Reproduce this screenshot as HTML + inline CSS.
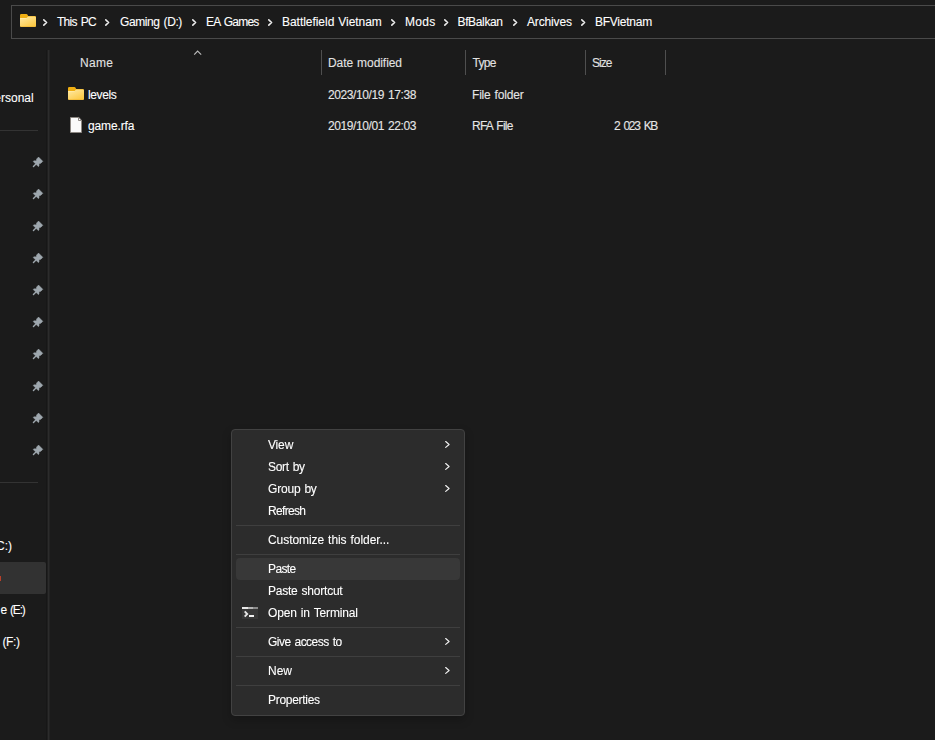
<!DOCTYPE html>
<html><head><meta charset="utf-8">
<style>
html,body{margin:0;padding:0;}
body{width:935px;height:740px;overflow:hidden;background:#1b1b1b;position:relative;font-family:"Liberation Sans",sans-serif;font-size:12px;}
.t{position:absolute;white-space:nowrap;line-height:14px;-webkit-text-stroke:0.1px currentColor;}
.ic{position:absolute;overflow:visible;}
.r{position:absolute;}
</style></head><body>
<svg width="0" height="0" style="position:absolute"><defs>
<linearGradient id="fg" x1="0" y1="0" x2="0.7" y2="1"><stop offset="0" stop-color="#ffeaa6"/><stop offset="1" stop-color="#fcc944"/></linearGradient>
</defs></svg>
<!-- address bar -->
<div class="r" style="left:11px;top:5px;width:940px;height:32px;border:1px solid #4a4a4a;"></div>
<svg class="ic" style="left:20px;top:14px" width="16" height="13" viewBox="0 0 16 13">
<path d="M0 1.2 Q0 0 1.2 0 H6.4 Q7 0 7.4 0.6 L8.2 2 H14.8 Q16 2 16 3.2 V5 H0 Z" fill="#efae12"/>
<path d="M0 4 H6.6 L8 2.6 H14.8 Q16 2.6 16 3.8 V11.8 Q16 13 14.8 13 H1.2 Q0 13 0 11.8 Z" fill="url(#fg)"/><path d="M0.4 12.4 H15.6" stroke="#f0b430" stroke-width="0.8" opacity="0.8"/><path d="M0.3 4.4 H6.6" stroke="#fff3c4" stroke-width="0.7" opacity="0.7"/>
</svg>
<svg class="ic" style="left:42px;top:17px" width="9" height="11" viewBox="0 0 9 11"><path d="M1.8 2.9 L4.6 5.5 L1.8 8.1" fill="none" stroke="#ececec" stroke-width="1.6" stroke-linecap="round" stroke-linejoin="round"/></svg><svg class="ic" style="left:104px;top:17px" width="9" height="11" viewBox="0 0 9 11"><path d="M1.8 2.9 L4.6 5.5 L1.8 8.1" fill="none" stroke="#ececec" stroke-width="1.6" stroke-linecap="round" stroke-linejoin="round"/></svg><svg class="ic" style="left:191px;top:17px" width="9" height="11" viewBox="0 0 9 11"><path d="M1.8 2.9 L4.6 5.5 L1.8 8.1" fill="none" stroke="#ececec" stroke-width="1.6" stroke-linecap="round" stroke-linejoin="round"/></svg><svg class="ic" style="left:266.5px;top:17px" width="9" height="11" viewBox="0 0 9 11"><path d="M1.8 2.9 L4.6 5.5 L1.8 8.1" fill="none" stroke="#ececec" stroke-width="1.6" stroke-linecap="round" stroke-linejoin="round"/></svg><svg class="ic" style="left:390px;top:17px" width="9" height="11" viewBox="0 0 9 11"><path d="M1.8 2.9 L4.6 5.5 L1.8 8.1" fill="none" stroke="#ececec" stroke-width="1.6" stroke-linecap="round" stroke-linejoin="round"/></svg><svg class="ic" style="left:443px;top:17px" width="9" height="11" viewBox="0 0 9 11"><path d="M1.8 2.9 L4.6 5.5 L1.8 8.1" fill="none" stroke="#ececec" stroke-width="1.6" stroke-linecap="round" stroke-linejoin="round"/></svg><svg class="ic" style="left:512px;top:17px" width="9" height="11" viewBox="0 0 9 11"><path d="M1.8 2.9 L4.6 5.5 L1.8 8.1" fill="none" stroke="#ececec" stroke-width="1.6" stroke-linecap="round" stroke-linejoin="round"/></svg><svg class="ic" style="left:580px;top:17px" width="9" height="11" viewBox="0 0 9 11"><path d="M1.8 2.9 L4.6 5.5 L1.8 8.1" fill="none" stroke="#ececec" stroke-width="1.6" stroke-linecap="round" stroke-linejoin="round"/></svg>
<!-- sidebar -->
<div class="r" style="left:46px;top:50px;width:1px;height:690px;background:#171717"></div>
<div class="r" style="left:47px;top:50px;width:1px;height:690px;background:#1f1f1f"></div>
<div class="r" style="left:48px;top:50px;width:1px;height:690px;background:#2c2c2c"></div>
<div class="r" style="left:49px;top:50px;width:1px;height:690px;background:#232323"></div>
<div class="r" style="left:0;top:130px;width:38px;height:1px;background:#333"></div>
<div class="r" style="left:0;top:482px;width:38px;height:1px;background:#333"></div>
<svg class="ic" style="left:30px;top:154px" width="16" height="16" viewBox="0 0 16 16"><g transform="translate(10.8,5.05) rotate(135)" fill="#9ea7ae"><path d="M0.2 -3.0 L2.8 -3.0 L4.6 -2.0 L6.1 -3.6 L7.1 -3.6 L7.1 3.6 L6.1 3.6 L4.6 2.0 L2.8 3.0 L0.2 3.0 Z" stroke="#9ea7ae" stroke-width="0.5" stroke-linejoin="round"/><rect x="6.5" y="-0.7" width="4.6" height="1.4" rx="0.7"/></g></svg><svg class="ic" style="left:30px;top:186px" width="16" height="16" viewBox="0 0 16 16"><g transform="translate(10.8,5.05) rotate(135)" fill="#9ea7ae"><path d="M0.2 -3.0 L2.8 -3.0 L4.6 -2.0 L6.1 -3.6 L7.1 -3.6 L7.1 3.6 L6.1 3.6 L4.6 2.0 L2.8 3.0 L0.2 3.0 Z" stroke="#9ea7ae" stroke-width="0.5" stroke-linejoin="round"/><rect x="6.5" y="-0.7" width="4.6" height="1.4" rx="0.7"/></g></svg><svg class="ic" style="left:30px;top:218px" width="16" height="16" viewBox="0 0 16 16"><g transform="translate(10.8,5.05) rotate(135)" fill="#9ea7ae"><path d="M0.2 -3.0 L2.8 -3.0 L4.6 -2.0 L6.1 -3.6 L7.1 -3.6 L7.1 3.6 L6.1 3.6 L4.6 2.0 L2.8 3.0 L0.2 3.0 Z" stroke="#9ea7ae" stroke-width="0.5" stroke-linejoin="round"/><rect x="6.5" y="-0.7" width="4.6" height="1.4" rx="0.7"/></g></svg><svg class="ic" style="left:30px;top:250px" width="16" height="16" viewBox="0 0 16 16"><g transform="translate(10.8,5.05) rotate(135)" fill="#9ea7ae"><path d="M0.2 -3.0 L2.8 -3.0 L4.6 -2.0 L6.1 -3.6 L7.1 -3.6 L7.1 3.6 L6.1 3.6 L4.6 2.0 L2.8 3.0 L0.2 3.0 Z" stroke="#9ea7ae" stroke-width="0.5" stroke-linejoin="round"/><rect x="6.5" y="-0.7" width="4.6" height="1.4" rx="0.7"/></g></svg><svg class="ic" style="left:30px;top:282px" width="16" height="16" viewBox="0 0 16 16"><g transform="translate(10.8,5.05) rotate(135)" fill="#9ea7ae"><path d="M0.2 -3.0 L2.8 -3.0 L4.6 -2.0 L6.1 -3.6 L7.1 -3.6 L7.1 3.6 L6.1 3.6 L4.6 2.0 L2.8 3.0 L0.2 3.0 Z" stroke="#9ea7ae" stroke-width="0.5" stroke-linejoin="round"/><rect x="6.5" y="-0.7" width="4.6" height="1.4" rx="0.7"/></g></svg><svg class="ic" style="left:30px;top:314px" width="16" height="16" viewBox="0 0 16 16"><g transform="translate(10.8,5.05) rotate(135)" fill="#9ea7ae"><path d="M0.2 -3.0 L2.8 -3.0 L4.6 -2.0 L6.1 -3.6 L7.1 -3.6 L7.1 3.6 L6.1 3.6 L4.6 2.0 L2.8 3.0 L0.2 3.0 Z" stroke="#9ea7ae" stroke-width="0.5" stroke-linejoin="round"/><rect x="6.5" y="-0.7" width="4.6" height="1.4" rx="0.7"/></g></svg><svg class="ic" style="left:30px;top:346px" width="16" height="16" viewBox="0 0 16 16"><g transform="translate(10.8,5.05) rotate(135)" fill="#9ea7ae"><path d="M0.2 -3.0 L2.8 -3.0 L4.6 -2.0 L6.1 -3.6 L7.1 -3.6 L7.1 3.6 L6.1 3.6 L4.6 2.0 L2.8 3.0 L0.2 3.0 Z" stroke="#9ea7ae" stroke-width="0.5" stroke-linejoin="round"/><rect x="6.5" y="-0.7" width="4.6" height="1.4" rx="0.7"/></g></svg><svg class="ic" style="left:30px;top:378px" width="16" height="16" viewBox="0 0 16 16"><g transform="translate(10.8,5.05) rotate(135)" fill="#9ea7ae"><path d="M0.2 -3.0 L2.8 -3.0 L4.6 -2.0 L6.1 -3.6 L7.1 -3.6 L7.1 3.6 L6.1 3.6 L4.6 2.0 L2.8 3.0 L0.2 3.0 Z" stroke="#9ea7ae" stroke-width="0.5" stroke-linejoin="round"/><rect x="6.5" y="-0.7" width="4.6" height="1.4" rx="0.7"/></g></svg><svg class="ic" style="left:30px;top:410px" width="16" height="16" viewBox="0 0 16 16"><g transform="translate(10.8,5.05) rotate(135)" fill="#9ea7ae"><path d="M0.2 -3.0 L2.8 -3.0 L4.6 -2.0 L6.1 -3.6 L7.1 -3.6 L7.1 3.6 L6.1 3.6 L4.6 2.0 L2.8 3.0 L0.2 3.0 Z" stroke="#9ea7ae" stroke-width="0.5" stroke-linejoin="round"/><rect x="6.5" y="-0.7" width="4.6" height="1.4" rx="0.7"/></g></svg><svg class="ic" style="left:30px;top:442px" width="16" height="16" viewBox="0 0 16 16"><g transform="translate(10.8,5.05) rotate(135)" fill="#9ea7ae"><path d="M0.2 -3.0 L2.8 -3.0 L4.6 -2.0 L6.1 -3.6 L7.1 -3.6 L7.1 3.6 L6.1 3.6 L4.6 2.0 L2.8 3.0 L0.2 3.0 Z" stroke="#9ea7ae" stroke-width="0.5" stroke-linejoin="round"/><rect x="6.5" y="-0.7" width="4.6" height="1.4" rx="0.7"/></g></svg>
<div class="r" style="left:-6px;top:562px;width:52px;height:32px;background:#323232;border-radius:2px"></div>
<div class="r" style="left:0;top:576px;width:1px;height:5px;background:#b8402a"></div>
<!-- column header -->
<svg class="ic" style="left:193px;top:49px" width="10" height="7" viewBox="0 0 10 7"><path d="M1.2 5.7 L4.6 2.1 L8.2 5.7" fill="none" stroke="#bcbcbc" stroke-width="1.1"/></svg>
<div class="r" style="left:321px;top:50px;width:1px;height:25px;background:#4f4f4f"></div>
<div class="r" style="left:465px;top:50px;width:1px;height:25px;background:#4f4f4f"></div>
<div class="r" style="left:585px;top:50px;width:1px;height:25px;background:#4f4f4f"></div>
<div class="r" style="left:665px;top:50px;width:1px;height:25px;background:#4f4f4f"></div>
<svg class="ic" style="left:68px;top:87px" width="16" height="13" viewBox="0 0 16 13">
<path d="M0 1.2 Q0 0 1.2 0 H6.4 Q7 0 7.4 0.6 L8.2 2 H14.8 Q16 2 16 3.2 V5 H0 Z" fill="#efae12"/>
<path d="M0 4 H6.6 L8 2.6 H14.8 Q16 2.6 16 3.8 V11.8 Q16 13 14.8 13 H1.2 Q0 13 0 11.8 Z" fill="url(#fg)"/><path d="M0.4 12.4 H15.6" stroke="#f0b430" stroke-width="0.8" opacity="0.8"/><path d="M0.3 4.4 H6.6" stroke="#fff3c4" stroke-width="0.7" opacity="0.7"/>
</svg>
<svg class="ic" style="left:70px;top:117px" width="12" height="16" viewBox="0 0 12 16">
<path d="M0.5 0.5 H8.8 L11.5 3.2 V15.5 H0.5 Z" fill="#fafafa" stroke="#8c8782" stroke-width="1"/>
<path d="M8.5 0.5 V3.5 H11.5" fill="none" stroke="#8c8782" stroke-width="1"/>
</svg>
<!-- context menu -->
<div class="r" style="left:231px;top:429px;width:234px;height:287px;border-radius:4px;box-shadow:0 4px 10px rgba(0,0,0,0.22)"></div>
<div class="r" style="left:231px;top:429px;width:232px;height:285px;background:#2c2c2c;border:1px solid #424242;border-radius:4px"></div>
<div class="r" style="left:236px;top:525px;width:224px;height:1px;background:#3f3f3f"></div>
<div class="r" style="left:236px;top:554px;width:224px;height:1px;background:#3f3f3f"></div>
<div class="r" style="left:236px;top:627px;width:224px;height:1px;background:#3f3f3f"></div>
<div class="r" style="left:236px;top:656px;width:224px;height:1px;background:#3f3f3f"></div>
<div class="r" style="left:236px;top:685px;width:224px;height:1px;background:#3f3f3f"></div>
<div class="r" style="left:236px;top:558px;width:224px;height:22px;background:#383838;border-radius:4px"></div>
<svg class="ic" style="left:443px;top:439px" width="10" height="10" viewBox="0 0 10 10"><path d="M2.7 2.5 L6.1 5.45 L2.7 8.4" fill="none" stroke="#f2f2f2" stroke-width="1.15" stroke-linecap="round" stroke-linejoin="round"/></svg><svg class="ic" style="left:443px;top:461px" width="10" height="10" viewBox="0 0 10 10"><path d="M2.7 2.5 L6.1 5.45 L2.7 8.4" fill="none" stroke="#f2f2f2" stroke-width="1.15" stroke-linecap="round" stroke-linejoin="round"/></svg><svg class="ic" style="left:443px;top:483px" width="10" height="10" viewBox="0 0 10 10"><path d="M2.7 2.5 L6.1 5.45 L2.7 8.4" fill="none" stroke="#f2f2f2" stroke-width="1.15" stroke-linecap="round" stroke-linejoin="round"/></svg><svg class="ic" style="left:443px;top:636px" width="10" height="10" viewBox="0 0 10 10"><path d="M2.7 2.5 L6.1 5.45 L2.7 8.4" fill="none" stroke="#f2f2f2" stroke-width="1.15" stroke-linecap="round" stroke-linejoin="round"/></svg><svg class="ic" style="left:443px;top:665px" width="10" height="10" viewBox="0 0 10 10"><path d="M2.7 2.5 L6.1 5.45 L2.7 8.4" fill="none" stroke="#f2f2f2" stroke-width="1.15" stroke-linecap="round" stroke-linejoin="round"/></svg>
<svg class="ic" style="left:242px;top:607px" width="16" height="12" viewBox="0 0 16 12">
<rect x="0" y="0" width="16" height="12" fill="#373737"/>
<rect x="0" y="0" width="6" height="2" fill="#e8e8e8"/><rect x="6" y="0" width="5" height="2" fill="#b4b4b4"/><rect x="11" y="0" width="5" height="2" fill="#8a8a8a"/>
<path d="M2.7 4.4 L5.2 7 L2.7 9.6" fill="none" stroke="#e6e6e6" stroke-width="1.9"/>
<rect x="7" y="8" width="5" height="2" fill="#f0f0f0"/>
</svg>
<div class="t" style="left:57.00px;top:15px;color:#ffffff;letter-spacing:-0.734px;word-spacing:1.404px">This PC</div>
<div class="t" style="left:120.00px;top:15px;color:#ffffff;letter-spacing:-0.408px;word-spacing:1.078px">Gaming (D:)</div>
<div class="t" style="left:206.00px;top:15px;color:#ffffff;letter-spacing:-0.778px;word-spacing:1.448px">EA Games</div>
<div class="t" style="left:282.00px;top:15px;color:#ffffff;letter-spacing:-0.039px;word-spacing:0.709px">Battlefield Vietnam</div>
<div class="t" style="left:405.00px;top:15px;color:#ffffff;letter-spacing:0.333px">Mods</div>
<div class="t" style="left:457.50px;top:15px;color:#ffffff;letter-spacing:-0.357px">BfBalkan</div>
<div class="t" style="left:527.00px;top:15px;color:#ffffff;letter-spacing:-0.143px">Archives</div>
<div class="t" style="left:595.00px;top:15px;color:#ffffff;letter-spacing:-0.250px">BFVietnam</div>
<div class="t" style="left:80.00px;top:56px;color:#e2e2e2;letter-spacing:0.333px">Name</div>
<div class="t" style="left:328.00px;top:56px;color:#e2e2e2;letter-spacing:-0.061px;word-spacing:0.731px">Date modified</div>
<div class="t" style="left:472.40px;top:56px;color:#e2e2e2;letter-spacing:-0.633px">Type</div>
<div class="t" style="left:592.00px;top:56px;color:#e2e2e2;letter-spacing:-1.000px">Size</div>
<div class="t" style="left:88.00px;top:88px;color:#ffffff;letter-spacing:-0.400px">levels</div>
<div class="t" style="left:328.00px;top:88px;color:#e6e6e6;letter-spacing:-0.405px;word-spacing:1.075px">2023/10/19 17:38</div>
<div class="t" style="left:472.00px;top:88px;color:#e6e6e6;letter-spacing:-0.186px;word-spacing:0.856px">File folder</div>
<div class="t" style="left:88.00px;top:119px;color:#ffffff;letter-spacing:-0.143px">game.rfa</div>
<div class="t" style="left:328.00px;top:119px;color:#e6e6e6;letter-spacing:-0.405px;word-spacing:1.075px">2019/10/01 22:03</div>
<div class="t" style="left:472.00px;top:119px;color:#e6e6e6;letter-spacing:-0.778px;word-spacing:1.448px">RFA File</div>
<div class="t" style="left:614.00px;top:119px;color:#e6e6e6;letter-spacing:-1.268px;word-spacing:1.938px">2 023 KB</div>
<div class="t" style="left:-75.00px;top:91px;color:#ffffff">OneDrive - Personal</div>
<div class="t" style="left:-66.70px;top:539px;color:#ffffff">Local Disk (C:)</div>
<div class="t" style="left:0.50px;top:603px;color:#ffffff;letter-spacing:-1.167px;word-spacing:1.837px">e (E:)</div>
<div class="t" style="left:2.50px;top:635px;color:#ffffff;letter-spacing:-0.400px">(F:)</div>
<div class="t" style="left:268.00px;top:438px;color:#ffffff;letter-spacing:-0.167px;will-change:transform">View</div>
<div class="t" style="left:268.00px;top:460px;color:#ffffff;letter-spacing:-0.334px;word-spacing:1.004px;will-change:transform">Sort by</div>
<div class="t" style="left:268.00px;top:482px;color:#ffffff;letter-spacing:-0.195px;word-spacing:0.865px;will-change:transform">Group by</div>
<div class="t" style="left:268.00px;top:504px;color:#ffffff;letter-spacing:-0.667px;will-change:transform">Refresh</div>
<div class="t" style="left:268.00px;top:533px;color:#ffffff;letter-spacing:-0.064px;word-spacing:0.734px;will-change:transform">Customize this folder...</div>
<div class="t" style="left:268.00px;top:562px;color:#ffffff;letter-spacing:-0.625px;will-change:transform">Paste</div>
<div class="t" style="left:268.00px;top:584px;color:#ffffff;letter-spacing:-0.223px;word-spacing:0.893px;will-change:transform">Paste shortcut</div>
<div class="t" style="left:268.00px;top:606px;color:#ffffff;letter-spacing:-0.142px;word-spacing:0.812px;will-change:transform">Open in Terminal</div>
<div class="t" style="left:268.00px;top:635px;color:#ffffff;letter-spacing:-0.540px;word-spacing:1.210px;will-change:transform">Give access to</div>
<div class="t" style="left:268.00px;top:664px;color:#ffffff;will-change:transform">New</div>
<div class="t" style="left:268.00px;top:693px;color:#ffffff;letter-spacing:-0.289px;will-change:transform">Properties</div>
</body></html>
